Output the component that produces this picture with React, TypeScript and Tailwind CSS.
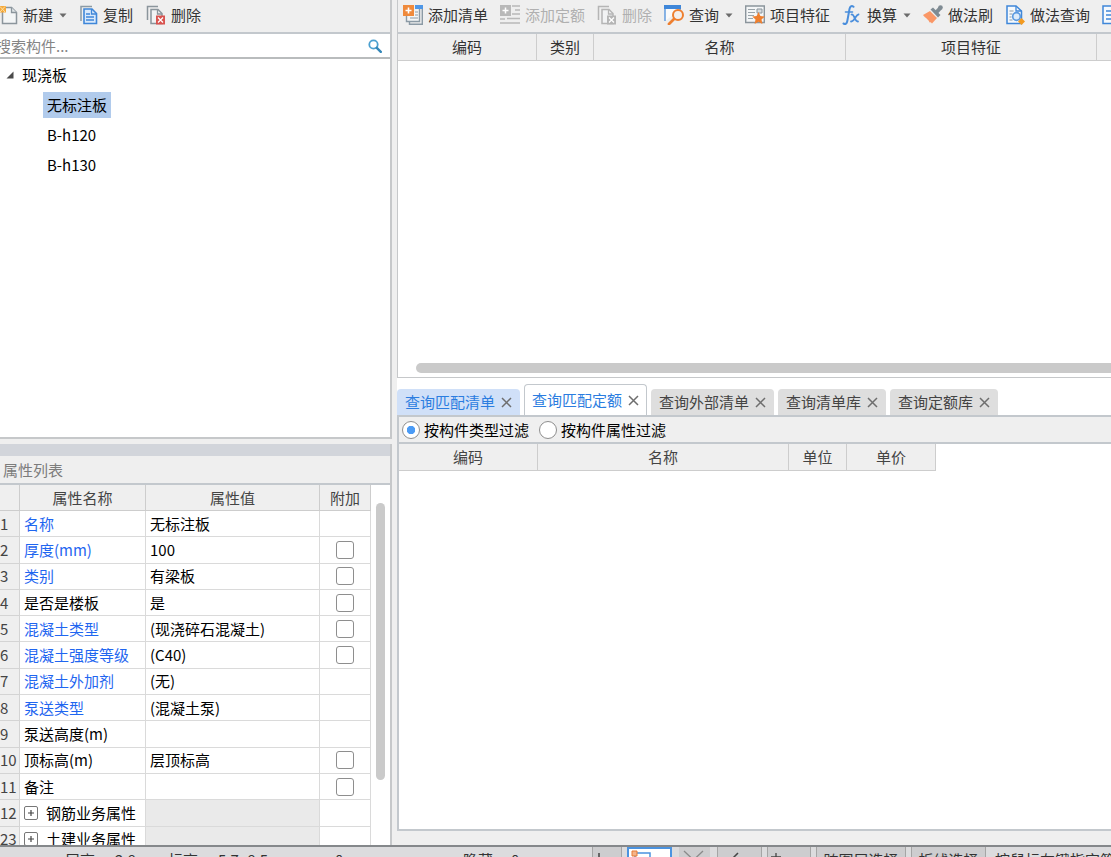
import React, { useState } from "react";

const Caret = () => (
  <svg width="8" height="5" viewBox="0 0 8 5" className="ml-px shrink-0">
    <path d="M0.5 0.5h7L4 4.5z" fill="#6b6b6b" />
  </svg>
);

const NewIcon = () => (
  <svg width="18" height="20" viewBox="0 0 18 20" className="shrink-0">
    <path d="M2.5 2.500h9l5 5v11h-14z" fill="#f3f5f6" stroke="#8b959c" strokeWidth="1.500" />
    <path d="M11.500 2.500v5h5" fill="#dfe4e7" stroke="#8b959c" strokeWidth="1.300" />
    <path d="M-1 1h7v6.500h-7z" fill="#f6a93b" />
    <path d="M0 1.500l5 5.500M5 1.500L0 7" stroke="#fbe0a8" strokeWidth="1" />
  </svg>
);

const CopyIcon = () => (
  <svg width="18" height="20" viewBox="0 0 18 20" className="shrink-0">
    <path d="M1 16V1.500h11" fill="none" stroke="#8b9aa5" strokeWidth="1.500" />
    <path d="M4 4h8l4.500 4.500V18.500H4z" fill="#d9e9fb" stroke="#3f87d9" strokeWidth="1.600" />
    <path d="M11.500 4v5h5" fill="none" stroke="#3f87d9" strokeWidth="1.300" />
    <path d="M6 9h4M6 12h8M6 15h8" stroke="#3f87d9" strokeWidth="1.500" />
  </svg>
);

const DeleteIcon = ({ muted = false }: { muted?: boolean }) => {
  const line = muted ? "#b5b5b5" : "#8b959c";
  return (
    <svg width="20" height="20" viewBox="0 0 20 20" className="shrink-0">
      <path d="M1.500 15V1.500H12" fill="none" stroke={line} strokeWidth="1.500" />
      <path d="M5 4.500h7l4 4v10H5z" fill="#f2f3f4" stroke={line} strokeWidth="1.500" />
      <path d="M11.500 4.500V9H16" fill="none" stroke={line} strokeWidth="1.300" />
      <path d="M10 10.500h9v9h-9z" fill={muted ? "#b5b5b5" : "#d9534f"} />
      <path d="M12 12.500l5 5M17 12.500l-5 5" stroke="#fff" strokeWidth="1.300" />
    </svg>
  );
};

const AddListIcon = () => (
  <svg width="20" height="20" viewBox="0 0 20 20" className="shrink-0">
    <path d="M12 0h8v4h-8z" fill="#4f97e6" />
    <path d="M19.300 4v15.300H6.500V16" fill="none" stroke="#8b9aa5" strokeWidth="1.400" />
    <path d="M3.500 11v5.500h13V4" fill="#f4f6f7" stroke="#8b9aa5" strokeWidth="1.400" />
    <path d="M12 7h3M12 10h3M7 13h8" stroke="#8b9aa5" strokeWidth="1.200" />
    <path d="M0 0h11v11H0z" fill="#ef8a3c" />
    <path d="M5.500 2.500v6M2.500 5.500h6" stroke="#fff" strokeWidth="1.600" />
  </svg>
);

const AddQuotaIcon = () => (
  <svg width="20" height="20" viewBox="0 0 20 20" className="shrink-0">
    <path d="M0 0h11v11H0z" fill="#b9b9b9" />
    <path d="M5.500 2.500v6M2.500 5.500h6" stroke="#fff" strokeWidth="1.500" />
    <path d="M12 1h8M15 5h5M12 9h8M7 13.500h13M0 18h20M0 14h5" stroke="#b9b9b9" strokeWidth="1.500" />
  </svg>
);

const QueryIcon = () => (
  <svg width="20" height="20" viewBox="0 0 20 20" className="shrink-0">
    <path d="M1 16V1h15v4" fill="#fafafa" stroke="#3f87d9" strokeWidth="1.200" />
    <path d="M0 0h17v4H0z" fill="#3f87d9" />
    <circle cx="14" cy="10" r="5" fill="#f3efec" stroke="#ee7f2f" strokeWidth="2" />
    <path d="M10 14l-5 5" stroke="#ee7f2f" strokeWidth="2.800" strokeLinecap="round" />
  </svg>
);

const FeatureIcon = () => (
  <svg width="20" height="20" viewBox="0 0 20 20" className="shrink-0">
    <path d="M.7 1h18.600v16.500H.7z" fill="#f4f6f7" stroke="#8b959c" strokeWidth="1.400" />
    <path d="M3 4.500h7M3 7.500h7M3 10.500h6M3 13.500h5" stroke="#9aa4aa" strokeWidth="1.200" />
    <path d="M12 4h5v4h-5z" fill="#d7dcdf" stroke="#8b959c" />
    <path d="M13.500 7l1.900 4.100 4.400.5-3.300 3 .9 4.400-3.900-2.200L9.600 19l.9-4.400-3.300-3 4.400-.5z" fill="#ee7f2f" />
  </svg>
);

const FxIcon = () => (
  <svg width="20" height="20" viewBox="0 0 20 20" className="shrink-0" fill="none" stroke="#4a8edc" strokeLinecap="round">
    <path d="M11.500 1.800C9.500.2 8 1.500 7.500 4L5.300 16c-.4 2.500-1.800 3.500-3.800 2.500" strokeWidth="2" />
    <path d="M3.500 7h7" strokeWidth="1.600" />
    <path d="M9.500 9.500c3-1 3 7.500 6.500 7M16.500 9.500c-2.500-.5-4 7.500-7.500 7" strokeWidth="1.800" />
  </svg>
);

const BrushIcon = () => (
  <svg width="20" height="20" viewBox="0 0 20 20" className="shrink-0">
    <path d="M0 10l7-4 7 7-5 5.500c-1-1-1.500-1.500-2.500-1C5.500 14 2 13 0 10z" fill="#fa9766" />
    <path d="M7.500 4.500l2.500-2 7.500 7.500-2.500 2.500z" fill="#7f8b93" />
    <path d="M12 6l4-4.500L19 4l-4.500 5z" fill="#7f8b93" />
    <circle cx="17.500" cy="2.500" r="2.300" fill="#7f8b93" />
  </svg>
);

const MethodQueryIcon = () => (
  <svg width="20" height="20" viewBox="0 0 20 20" className="shrink-0">
    <path d="M2 1h9l5.500 5v12.500H2z" fill="#f5f9fd" stroke="#3f87d9" strokeWidth="1.500" />
    <path d="M11 1v5h5.500" fill="none" stroke="#3f87d9" strokeWidth="1.300" />
    <path d="M4.500 6h4M4.500 9h3M4.500 12h2M4.500 15h3" stroke="#8b9aa5" strokeWidth="1.200" />
    <circle cx="11.500" cy="11.500" r="3.800" fill="#dcebfa" stroke="#5c9be0" strokeWidth="1.700" />
    <path d="M16.500 13l3.500 3.500-3.500 3.500-3.500-3.500z" fill="#f39a1f" />
  </svg>
);

const SheetIcon = () => (
  <svg width="20" height="20" viewBox="0 0 20 20" className="shrink-0">
    <path d="M1 1h15v17.500H1z" fill="#f5f9fd" stroke="#3f87d9" strokeWidth="1.500" />
    <path d="M4 6h9M4 10h9M4 14h9" stroke="#3f87d9" strokeWidth="1.300" />
  </svg>
);

type ToolProps = {
  icon: React.ReactNode;
  label: string;
  disabled?: boolean;
  menu?: boolean;
};

const Tool = ({ icon, label, disabled, menu }: ToolProps) => (
  <button
    type="button"
    disabled={disabled}
    className="flex shrink-0 items-center gap-[5px] whitespace-nowrap text-[#333] disabled:text-[#b0b0b0]"
  >
    {icon}
    <span>{label}</span>
    {menu && <Caret />}
  </button>
);

const properties = [
  { no: 1, name: "名称", value: "无标注板", link: true },
  { no: 2, name: "厚度(mm)", value: "100", link: true, check: true },
  { no: 3, name: "类别", value: "有梁板", link: true, check: true },
  { no: 4, name: "是否是楼板", value: "是", check: true },
  { no: 5, name: "混凝土类型", value: "(现浇碎石混凝土)", link: true, check: true },
  { no: 6, name: "混凝土强度等级", value: "(C40)", link: true, check: true },
  { no: 7, name: "混凝土外加剂", value: "(无)", link: true },
  { no: 8, name: "泵送类型", value: "(混凝土泵)", link: true },
  { no: 9, name: "泵送高度(m)", value: "" },
  { no: 10, name: "顶标高(m)", value: "层顶标高", check: true },
  { no: 11, name: "备注", value: "", check: true },
  { no: 12, name: "钢筋业务属性", value: "", group: true },
  { no: 23, name: "土建业务属性", value: "", group: true },
];

const tabs = ["查询匹配清单", "查询匹配定额", "查询外部清单", "查询清单库", "查询定额库"];

const ComponentPanel = () => {
  const [selected, setSelected] = useState("无标注板");

  return (
    <section className="flex min-h-0 flex-col border-r-2 border-b-2 border-[#c6c8ca] bg-white">
      <div className="flex h-[34px] shrink-0 items-center gap-[13px] border-b-2 border-[#c3c8cd] bg-[#efefef] pb-0.5">
        <Tool icon={<NewIcon />} label="新建" menu />
        <Tool icon={<CopyIcon />} label="复制" />
        <Tool icon={<DeleteIcon />} label="删除" />
      </div>
      <div className="flex h-[25px] shrink-0 items-center border-b-2 border-[#b9bcbd] pr-2">
        <input
          type="text"
          aria-label="搜索构件"
          placeholder="搜索构件..."
          className="-ml-1 min-w-0 flex-1 outline-none placeholder:text-[#858585]"
        />
        <svg width="14" height="14" viewBox="0 0 14 14">
          <circle cx="5.500" cy="5.500" r="4.200" fill="none" stroke="#4ba0d0" strokeWidth="1.800" />
          <path d="M8.800 8.800l4 4" stroke="#3487b8" strokeWidth="2.400" strokeLinecap="round" />
        </svg>
      </div>
      <div className="flex-1 pt-1 text-black">
        <div className="flex h-6 items-center gap-2 pl-1.5">
          <svg width="8" height="8" viewBox="0 0 8 8">
            <path d="M7.500 0.500v7H0.500z" fill="#4a4a4a" />
          </svg>
          现浇板
        </div>
        <ul className="flex flex-col items-start gap-1 pt-[5px] pl-[43px]">
          {["无标注板", "B-h120", "B-h130"].map((item) => (
            <li key={item}>
              <button
                type="button"
                onClick={() => setSelected(item)}
                className={
                  selected === item
                    ? "h-[26px] bg-[#b1cbec] px-1"
                    : "h-[26px] px-1"
                }
              >
                {item}
              </button>
            </li>
          ))}
        </ul>
      </div>
    </section>
  );
};

const PropertyPanel = () => (
  <section className="flex min-h-0 flex-col overflow-hidden border-r-2 border-[#c6c8ca] bg-white">
    <div className="h-3 shrink-0 bg-[#d2d5db]" />
    <h2 className="flex h-[29px] shrink-0 items-center border-b-2 border-[#c3c8cd] bg-[#efefef] pl-[3px] text-[#7c7c7c]">
      属性列表
    </h2>
    <div className="flex min-h-0 flex-1 overflow-hidden">
      <table className="h-[368px] w-[371px] shrink-0 table-fixed border-separate border-spacing-0">
        <colgroup>
          <col className="w-5" />
          <col className="w-[126px]" />
          <col className="w-[174px]" />
          <col className="w-[51px]" />
        </colgroup>
        <thead>
          <tr className="h-[26px] bg-[#efefef] text-[#444]">
            <th className="border-r border-b border-[#cdcdcd] p-0" />
            <th className="border-r border-b border-[#cdcdcd] p-0 font-normal">属性名称</th>
            <th className="border-r border-b border-[#cdcdcd] p-0 font-normal">属性值</th>
            <th className="border-r border-b border-[#cdcdcd] p-0 font-normal">附加</th>
          </tr>
        </thead>
        <tbody>
          {properties.map((row) => (
            <tr key={row.no} className="h-[26px] whitespace-nowrap text-black">
              <td className="border-r border-b border-[#d4d4d4] bg-[#efefef] p-0 text-[#444]">
                {row.no}
              </td>
              <td className="border-r border-b border-[#dadada] p-0 pl-1">
                {row.group ? (
                  <span className="flex items-center gap-2">
                    <button
                      type="button"
                      aria-label={"展开" + row.name}
                      className="flex size-3.5 items-center justify-center rounded-xs border border-[#777]"
                    >
                      <svg width="8" height="8" viewBox="0 0 8 8">
                        <path d="M4 1v6M1 4h6" stroke="#444" strokeWidth="1.200" />
                      </svg>
                    </button>
                    {row.name}
                  </span>
                ) : (
                  <span className={row.link ? "text-[#1f66f0]" : "text-black"}>{row.name}</span>
                )}
              </td>
              <td
                className={
                  row.group
                    ? "border-r border-b border-[#dadada] bg-[#eaeaea] p-0"
                    : "border-r border-b border-[#dadada] p-0 pl-1"
                }
              >
                {row.value}
              </td>
              <td className="border-r border-b border-[#dadada] p-0">
                {row.check && (
                  <input
                    type="checkbox"
                    aria-label={row.name + "附加"}
                    className="mx-auto block size-[18px] appearance-none rounded-[3px] border border-[#8e8e8e] bg-white checked:bg-[#4b9bf5]"
                  />
                )}
              </td>
            </tr>
          ))}
        </tbody>
      </table>
      <div className="flex flex-1 justify-center pt-[18px]">
        <div className="h-[277px] w-[9px] rounded-full bg-[#cacaca]" />
      </div>
    </div>
  </section>
);

const MethodPanel = () => (
  <section className="flex min-h-0 min-w-0 flex-col overflow-hidden border-b border-l border-[#c6c8ca] bg-white">
    <div className="flex h-[34px] shrink-0 items-center gap-3 border-b-2 border-[#c3c8cd] bg-[#efefef] pb-0.5 pl-[5px]">
      <Tool icon={<AddListIcon />} label="添加清单" />
      <Tool icon={<AddQuotaIcon />} label="添加定额" disabled />
      <Tool icon={<DeleteIcon muted />} label="删除" disabled />
      <Tool icon={<QueryIcon />} label="查询" menu />
      <Tool icon={<FeatureIcon />} label="项目特征" />
      <Tool icon={<FxIcon />} label="换算" menu />
      <Tool icon={<BrushIcon />} label="做法刷" />
      <Tool icon={<MethodQueryIcon />} label="做法查询" />
      <Tool icon={<SheetIcon />} label="提取做法" />
    </div>
    <div className="min-h-0 flex-1 overflow-hidden">
      <table className="w-[757px] table-fixed border-separate border-spacing-0">
        <colgroup>
          <col className="w-[139px]" />
          <col className="w-[57px]" />
          <col className="w-[252px]" />
          <col className="w-[251px]" />
          <col className="w-[58px]" />
        </colgroup>
        <thead>
          <tr className="h-[27px] bg-[#efefef] text-[#333]">
            {["编码", "类别", "名称", "项目特征", "单位"].map((head) => (
              <th key={head} className="border-r border-b border-[#cdcdcd] p-0 font-normal">
                {head}
              </th>
            ))}
          </tr>
        </thead>
      </table>
    </div>
    <div className="h-3.5 shrink-0 pl-[18px]">
      <div className="h-2.5 rounded-l-full bg-[#cacaca]" />
    </div>
  </section>
);

const QueryPanel = () => {
  const [active, setActive] = useState("查询匹配定额");
  const [filter, setFilter] = useState("type");

  const tabStyle = (tab: string) => {
    if (tab === active)
      return "flex h-[31px] items-center gap-1.5 rounded-t-sm border border-b-0 border-[#c3c8cd] bg-white px-[7px] text-[#2b7de0]";
    if (tab === "查询匹配清单")
      return "flex h-[26px] items-center gap-1.5 rounded-t-sm bg-[#d0e0f8] px-2 text-[#2b7de0]";
    return "flex h-[26px] items-center gap-1.5 rounded-t-sm bg-[#dedede] px-2 text-[#444]";
  };

  return (
    <section className="flex min-h-0 min-w-0 flex-col bg-[#efefef] pb-3.5">
      <div role="tablist" className="flex h-[37px] shrink-0 items-end gap-1 bg-white">
        {tabs.map((tab) => (
          <div key={tab} className={tabStyle(tab)}>
            <button
              type="button"
              role="tab"
              aria-selected={tab === active}
              onClick={() => setActive(tab)}
              className="whitespace-nowrap"
            >
              {tab}
            </button>
            <button type="button" aria-label={"关闭" + tab}>
              <svg width="11" height="11" viewBox="0 0 11 11">
                <path d="M1 1l9 9M10 1l-9 9" stroke="#6e6e6e" strokeWidth="1.500" />
              </svg>
            </button>
          </div>
        ))}
      </div>
      <div className="flex min-h-0 flex-1 flex-col border-y-2 border-l-2 border-[#c3c8cd] bg-white">
        <div className="flex h-[27px] shrink-0 items-center gap-2.5 border-b-2 border-[#c3c8cd] bg-[#efefef] pl-[3px] text-black">
          {[
            ["type", "按构件类型过滤"],
            ["attr", "按构件属性过滤"],
          ].map(([key, text]) => (
            <label key={key} className="flex items-center gap-1">
              <input
                type="radio"
                name="filter"
                checked={filter === key}
                onChange={() => setFilter(key)}
                className="size-[18px] appearance-none rounded-full border border-[#8e8e8e] bg-white checked:bg-radial checked:from-[#4b9bf5] checked:from-35% checked:to-white checked:to-40%"
              />
              {text}
            </label>
          ))}
        </div>
        <table className="w-[537px] table-fixed border-separate border-spacing-0">
          <colgroup>
            <col className="w-[139px]" />
            <col className="w-[251px]" />
            <col className="w-[58px]" />
            <col className="w-[89px]" />
          </colgroup>
          <thead>
            <tr className="h-[27px] bg-[#efefef] text-[#444]">
              {["编码", "名称", "单位", "单价"].map((head) => (
                <th key={head} className="border-r border-b border-[#cdcdcd] p-0 font-normal">
                  {head}
                </th>
              ))}
            </tr>
          </thead>
        </table>
      </div>
    </section>
  );
};

const StatusBar = () => (
  <footer className="h-3 shrink-0 overflow-hidden border-t-2 border-[#85888b] bg-[#dcdcde] text-[#333]">
    <div className="flex h-[26px] whitespace-nowrap">
      <div className="flex w-[592px] shrink-0 items-center pl-[65px]">
        <span className="w-[50px]">层高:</span>
        <span className="w-[53px]">2.8</span>
        <span className="w-[50px]">标高:</span>
        <span className="w-[117px]">5.7~8.5</span>
        <span className="w-[128px]">0</span>
        <span className="w-12">隐藏:</span>
        <span>0</span>
      </div>
      <div className="flex items-stretch gap-[5px]">
        <button type="button" aria-label="正交" className="w-[30px] border-x border-[#a5a5a5] bg-[#cdcdcf]">
          <svg width="28" height="24" viewBox="0 0 28 24">
            <path d="M6 5v14h14" fill="none" stroke="#444" strokeWidth="1.500" />
          </svg>
        </button>
        <button type="button" aria-label="对象捕捉" className="w-[45px] border-2 border-[#4b93e0] bg-white">
          <svg width="41" height="22" viewBox="0 0 41 22">
            <path d="M6 4h15v14H6z" fill="none" stroke="#4b93e0" strokeWidth="1.500" />
            <path d="M3 2h5v5H3z" fill="#f4b48a" stroke="#e77b35" />
          </svg>
        </button>
        <button type="button" aria-label="交点" className="ml-0.5 w-[31px] bg-[#cdcdcf]">
          <svg width="31" height="24" viewBox="0 0 31 24">
            <path d="M5 3l19 18M24 3L5 21" stroke="#8a8a8a" strokeWidth="1.300" />
          </svg>
        </button>
        <button type="button" aria-label="垂点" className="ml-0.5 w-[45px] border-x border-[#a5a5a5] bg-[#cdcdcf]">
          <svg width="43" height="24" viewBox="0 0 43 24">
            <path d="M20 5L8 17" stroke="#444" strokeWidth="1.500" />
          </svg>
        </button>
        <button type="button" aria-label="中点" className="w-11 border-x border-[#a5a5a5] bg-[#cdcdcf]">
          <svg width="42" height="24" viewBox="0 0 42 24">
            <path d="M8 5v12M3 9h10" stroke="#444" strokeWidth="1.300" />
          </svg>
        </button>
        <button type="button" className="w-[90px] border-x border-[#a5a5a5] bg-[#cdcdcf]">
          跨图层选择
        </button>
        <button type="button" className="w-[75px] border-x border-[#a5a5a5] bg-[#cdcdcf]">
          折线选择
        </button>
        <span className="self-center pl-1">按鼠标左键指定第一个角点，或拾取构件图元</span>
      </div>
    </div>
  </footer>
);

export default function App() {
  return (
    <div className="flex h-screen flex-col overflow-hidden bg-[#efefef] font-['Noto_Sans_CJK_SC',sans-serif] text-[15px] leading-5">
      <main className="flex min-h-0 flex-1 gap-[5px]">
        <div className="grid w-[392px] shrink-0 grid-rows-[439fr_401fr] gap-[5px]">
          <ComponentPanel />
          <PropertyPanel />
        </div>
        <div className="grid min-w-0 flex-1 grid-rows-[378fr_467fr]">
          <MethodPanel />
          <QueryPanel />
        </div>
      </main>
      <StatusBar />
    </div>
  );
}
